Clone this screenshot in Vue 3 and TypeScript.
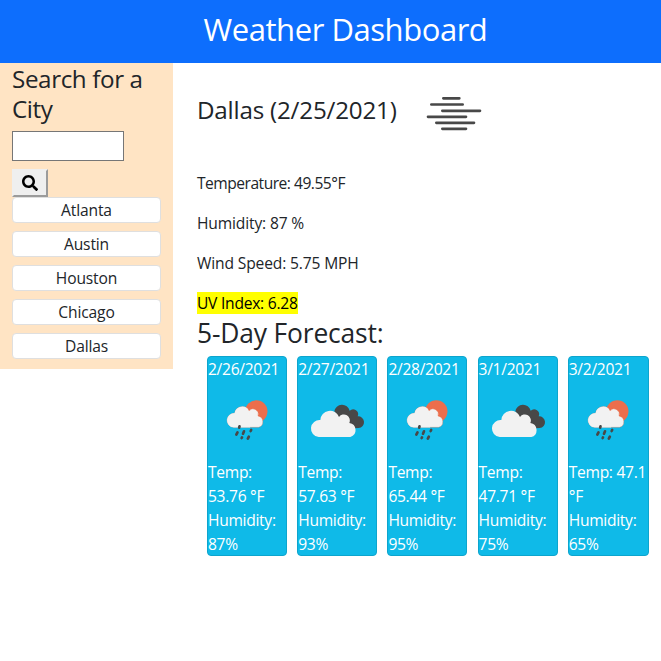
<script setup lang="ts">
interface Forecast {
  date: string
  icon: 'rain' | 'clouds'
  temp: string
  humidity: number
}

const cities: string[] = ['Atlanta', 'Austin', 'Houston', 'Chicago', 'Dallas']

const forecast: Forecast[] = [
  { date: '2/26/2021', icon: 'rain', temp: '53.76', humidity: 87 },
  { date: '2/27/2021', icon: 'clouds', temp: '57.63', humidity: 93 },
  { date: '2/28/2021', icon: 'rain', temp: '65.44', humidity: 95 },
  { date: '3/1/2021', icon: 'clouds', temp: '47.71', humidity: 75 },
  { date: '3/2/2021', icon: 'rain', temp: '47.1', humidity: 65 },
]
</script>

<template>
  <header class="banner"><h1>Weather Dashboard</h1></header>
  <div class="layout">
    <aside class="sidebar">
      <h3>Search for a City</h3>
      <input class="city-input" type="text" />
      <button class="search" type="button" aria-label="Search">
        <svg viewBox="0 0 512 512" width="16" height="16">
          <path d="M505 442.700 405.300 343c-4.500-4.500-10.600-7-17-7H372c27.600-35.300 44-79.700 44-128C416 93.100 322.900 0 208 0S0 93.100 0 208s93.100 208 208 208c48.300 0 92.700-16.400 128-44v16.300c0 6.400 2.500 12.500 7 17l99.700 99.700c9.400 9.400 24.600 9.400 33.900 0l28.300-28.300c9.400-9.400 9.400-24.600.1-34zM208 336c-70.700 0-128-57.200-128-128 0-70.700 57.200-128 128-128 70.700 0 128 57.200 128 128 0 70.700-57.200 128-128 128z" />
        </svg>
      </button>
      <ul class="cities">
        <li v-for="city in cities" :key="city">{{ city }}</li>
      </ul>
    </aside>
    <main class="content">
      <div class="current">
        <h3>Dallas (2/25/2021)</h3>
        <svg class="mist" viewBox="642 9 300 300" width="100" height="100">
          <path d="M760 115H808M724 133.500H818M757 152.500H870M714 170.500H828M739 188.500H852M757 206.500H828" />
        </svg>
      </div>
      <p class="temperature">Temperature: 49.55°F</p>
      <p>Humidity: 87 %</p>
      <p>Wind Speed: 5.75 MPH</p>
      <p class="uv"><mark>UV Index: 6.28</mark></p>
      <h2>5-Day Forecast:</h2>
      <div class="cards">
        <article v-for="day in forecast" :key="day.date" class="card">
          <div>{{ day.date }}</div>
          <svg class="icon" viewBox="24 93 234 237">
            <template v-if="day.icon === 'rain'">
              <circle cx="169" cy="184" r="33.500" fill="#ec6e4c" />
              <path fill="#f2f2f2" stroke="#e8603c" stroke-width="1" d="M101 232A21 21 0 0 1 104 190A23 23 0 0 1 147 182A16 16 0 0 1 174 198A17.500 17.500 0 0 1 176 232Z" />
              <path fill="#f2f2f2" stroke="#f2f2f2" stroke-width="1" d="M101 232A21 21 0 0 1 104 190A23 23 0 0 1 143 177L150 232Z" />
              <path class="drops" d="M118.500 229L117.500 233M112.500 247L109 254M132 244L129 251M153.500 240L152 243M126 262L125 264M146.500 260L143.500 266" />
            </template>
            <template v-else>
              <path fill="#484848" d="M133 184A23.500 23.500 0 0 1 179 182A15 15 0 0 1 203 199A17.500 17.500 0 0 1 206 234L170 236Z" />
              <path fill="#f2f2f2" d="M86 261A25.500 25.500 0 0 1 91 210A29 29 0 0 1 147 201A18 18 0 0 1 178 219A21.500 21.500 0 0 1 181 261Z" />
            </template>
          </svg>
          <div>Temp: {{ day.temp }} °F</div>
          <div>Humidity: {{ day.humidity }}%</div>
        </article>
      </div>
    </main>
  </div>
</template>

<style>
body {
  margin: 0;
  background: #fff;
}
</style>

<style scoped>
* {
  box-sizing: border-box;
}
.banner,
.layout {
  font-family: 'Open Sans', 'Noto Sans', sans-serif;
  font-size: 15.6px;
  line-height: 24px;
  letter-spacing: -0.15px;
  color: #212529;
}
h1,
h2,
h3,
p,
ul {
  margin: 0;
  padding: 0;
  font-weight: 400;
}
.banner {
  height: 63px;
  padding: 10px 0 0 30px;
  background: #0d6efd;
  color: #fff;
  text-align: center;
}
h1 {
  font-size: 31px;
  line-height: 38px;
  letter-spacing: -0.45px;
}
h3 {
  font-size: 24.2px;
  line-height: 30px;
  letter-spacing: -0.38px;
}
h2 {
  margin-top: 2px;
  font-size: 26.4px;
  line-height: 32px;
  letter-spacing: -0.15px;
}
.layout {
  display: flex;
  align-items: flex-start;
}
.sidebar {
  display: flex;
  flex-direction: column;
  align-items: flex-start;
  width: 173px;
  height: 306px;
  padding: 1px 12px 0;
  background: #ffe4c4;
}
.city-input {
  width: 112px;
  height: 30px;
  margin: 7px 0 8px;
  border: 1px solid #767676;
  background: #fff;
}
.search {
  display: flex;
  align-items: center;
  justify-content: center;
  width: 36px;
  height: 28px;
  padding: 0;
  border: 2px outset #efefef;
  background: #efefef;
  color: #000;
}
.cities {
  display: grid;
  gap: 8px;
  width: 149px;
  list-style: none;
}
.cities li {
  height: 26px;
  border: 1px solid #dfdfdf;
  border-radius: 4px;
  background: #fff;
  text-align: center;
}
.content {
  flex: 1;
  padding: 0 12px 0 24px;
}
.current {
  display: flex;
  align-items: center;
  gap: 7px;
  height: 100px;
  margin-bottom: 8px;
}
.current h3 {
  width: 200px;
  margin-top: -6px;
  letter-spacing: -0.2px;
  white-space: nowrap;
}
.mist path {
  fill: none;
  stroke: #484848;
  stroke-width: 8;
  stroke-linecap: round;
}
p {
  margin-bottom: 16px;
}
.temperature {
  letter-spacing: -0.5px;
}
.uv {
  margin: 0;
  letter-spacing: -0.25px;
}
mark {
  display: inline-block;
  height: 22px;
  margin-top: 1px;
  background: #ff0;
  color: #000;
  line-height: 22px;
}
.cards {
  display: grid;
  grid-template-columns: repeat(4, 80.1px) 1fr;
  gap: 10.1px;
  margin: 7px 0 0 10px;
}
.card {
  height: 200px;
  border: 1px solid #0da5cd;
  border-radius: 4px;
  background: #0fbae8;
  color: #fff;
  letter-spacing: -0.3px;
}
.icon {
  display: block;
  width: 78px;
  height: 79px;
}
.drops {
  fill: none;
  stroke: #484848;
  stroke-width: 8;
  stroke-linecap: round;
}
</style>
